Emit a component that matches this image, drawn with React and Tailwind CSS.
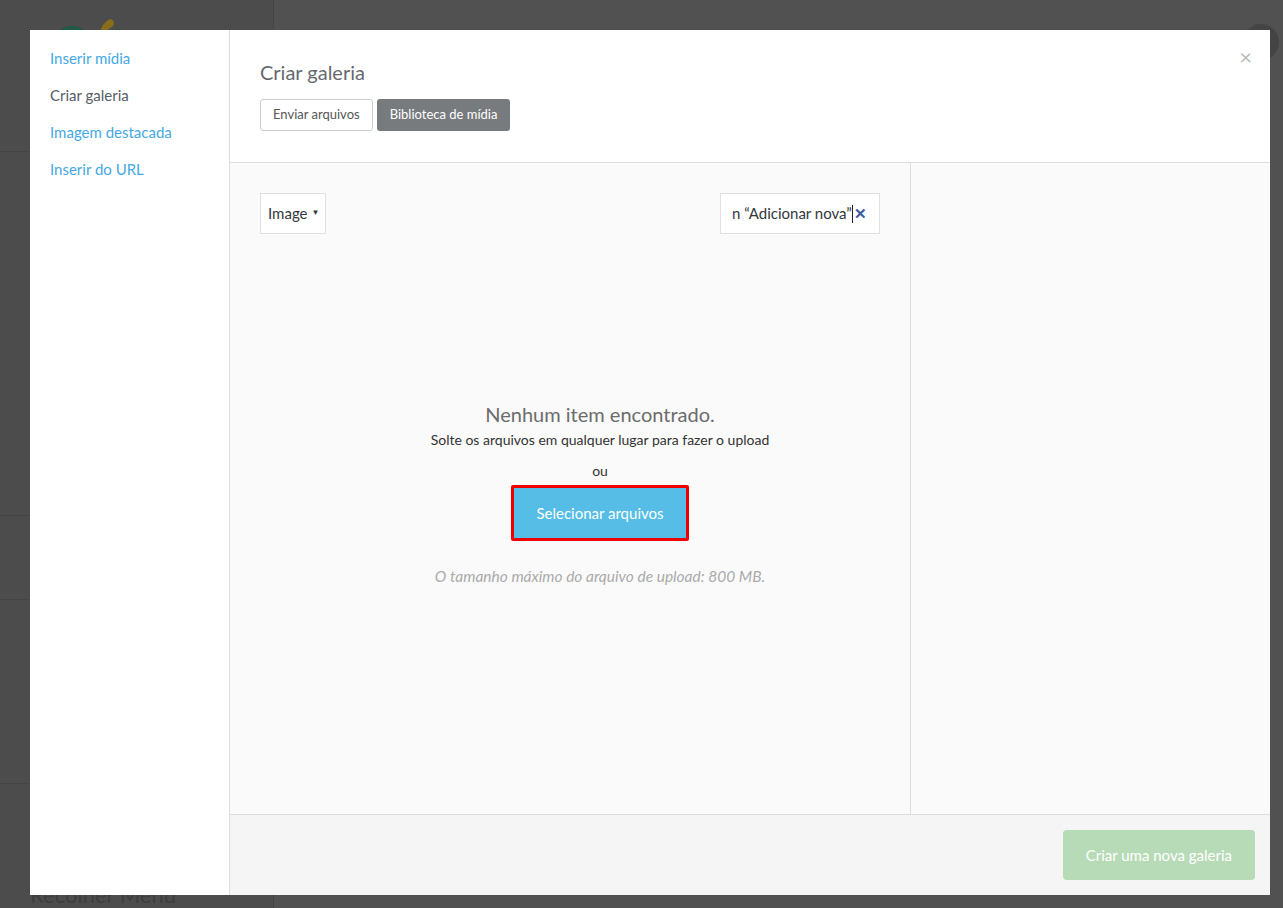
import React from 'react'

const menu = [
    { label: 'Inserir mídia', active: false },
    { label: 'Criar galeria', active: true },
    { label: 'Imagem destacada', active: false },
    { label: 'Inserir do URL', active: false },
]

const Backdrop = () => (
    <div className="flex h-[908px] w-full overflow-hidden bg-[#515151]">
        <div className="relative flex w-[274px] flex-col border-r border-[#464646] bg-[#4c4c4c]">
            <div className="relative h-[152px] border-b border-[#454545]">
                <svg className="absolute left-[58px] top-[18px]" width="70" height="20" viewBox="0 0 70 20">
                    <ellipse cx="14" cy="14" rx="12" ry="6" fill="#1f5a45" />
                    <path d="M52 1 C44 5 41 13 43 20 L47 20 C47 14 50 11 54 9 C57 7 57 2 52 1 Z" fill="#8a6d1a" />
                    <ellipse cx="60" cy="16" rx="7" ry="5" fill="#1f5a45" />
                </svg>
            </div>
            <div className="h-[364px] border-b border-[#454545]" />
            <div className="h-[84px] border-b border-[#454545]" />
            <div className="h-[184px] border-b border-[#454545]" />
            <div className="flex-1 pl-[30px] pt-[100px]">
                <div className="text-[22px] leading-[22px] text-[#3e3e3e]">Recolher Menu</div>
            </div>
        </div>
        <div className="flex-1" />
        <div className="absolute right-[4px] top-[24px] h-[36px] w-[36px] rounded-full bg-[#444444]" />
    </div>
)

const App = () => {
    return (
        <div className="relative h-[908px] w-full overflow-hidden" style={{ fontFamily: 'Lato, "Noto Sans", sans-serif' }}>
            <Backdrop />
            <div className="absolute inset-0 p-[30px] pr-[13px] pb-[13px]">
                <div className="flex h-[865px] w-[1240px] bg-white">
                    {/* sidebar */}
                    <div className="flex w-[200px] flex-col gap-[15px] border-r border-[#dddddd] px-[20px] pt-[17px]">
                        {menu.map((item) => (
                            <div
                                key={item.label}
                                className={`text-[15px] leading-[22px] ${item.active ? 'text-[#555d66]' : 'text-[#45a8e2]'}`}
                            >
                                {item.label}
                            </div>
                        ))}
                    </div>

                    {/* main */}
                    <div className="relative flex flex-1 flex-col">
                        <div className="absolute right-[18px] top-[16px] text-[22px] leading-[22px] text-[#bbbbbb]">×</div>
                        <div className="h-[133px] border-b border-[#dddddd] px-[30px] pt-[29px]">
                            <h1 className="text-[20px] leading-[26px] text-[#666a6e]">Criar galeria</h1>
                            <div className="mt-[14px] flex gap-[4px]">
                                <div className="flex h-[32px] items-center rounded-[3px] border border-[#cccccc] bg-white px-[12px] text-[13px] text-[#555555]">
                                    Enviar arquivos
                                </div>
                                <div className="flex h-[32px] items-center rounded-[3px] bg-[#777b7e] px-[13px] text-[13px] text-white">
                                    Biblioteca de mídia
                                </div>
                            </div>
                        </div>

                        <div className="flex flex-1">
                            <div className="flex w-[680px] flex-col bg-[#fafafa] px-[30px] pt-[30px]">
                                <div className="flex items-center justify-between">
                                    <div className="flex h-[41px] items-center gap-[4px] border border-[#e0e0e0] bg-white pl-[7px] pr-[6px] text-[15px] text-[#32373c]">
                                        Image <span className="mb-[3px] text-[8px] leading-none">▼</span>
                                    </div>
                                    <div className="flex h-[41px] w-[160px] items-center overflow-hidden border border-[#e0e0e0] bg-white pl-[11px] text-[15px] text-[#32373c]">
                                        <span className="whitespace-nowrap">n “Adicionar nova”</span>
                                        <span className="h-[18px] w-px bg-[#222222]" />
                                        <span className="ml-[1px] text-[15px] font-bold text-[#3b5aa0]">✕</span>
                                    </div>
                                </div>
                                <div className="flex flex-1 flex-col items-center pl-[60px] pt-[168px]">
                                    <div className="text-[20px] leading-[24px] text-[#6c6c6c]">Nenhum item encontrado.</div>
                                    <div className="mt-[5px] text-[14px] leading-[18px] text-[#333333]">Solte os arquivos em qualquer lugar para fazer o upload</div>
                                    <div className="mt-[13px] text-[14px] leading-[18px] text-[#333333]">ou</div>
                                    <div className="mt-[5px] rounded-[2px] border-[3px] border-[#ee0000] bg-[#55bde6] px-[22px] py-[16px] text-[15px] leading-[18px] text-white">
                                        Selecionar arquivos
                                    </div>
                                    <div className="mt-[25px] text-[15.5px] italic leading-[20px] text-[#aaaaaa]">O tamanho máximo do arquivo de upload: 800 MB.</div>
                                </div>
                            </div>
                            <div className="flex-1 border-l border-[#dddddd] bg-[#fafafa]" />
                        </div>

                        <div className="flex h-[81px] items-center justify-end border-t border-[#dddddd] bg-[#f5f5f5] pr-[15px]">
                            <div className="flex h-[50px] items-center rounded-[4px] bg-[#b7dbb7] px-[23px] text-[15px] text-white">
                                Criar uma nova galeria
                            </div>
                        </div>
                    </div>
                </div>
            </div>
        </div>
    )
}

export default App
